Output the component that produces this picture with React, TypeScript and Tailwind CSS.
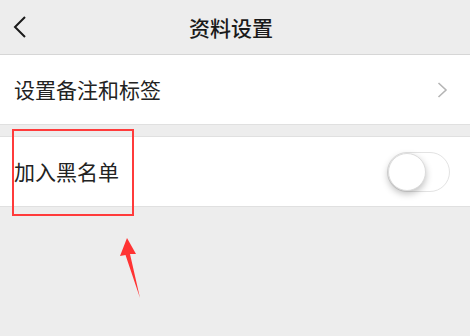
const font = "font-['Noto_Sans_CJK_SC','Noto_Sans',sans-serif]";

function Toggle() {
  return (
    <div className="w-[63px] h-[40px] rounded-full border border-[#e3e3e3] bg-white relative">
      <div className="absolute left-0 top-0 w-[38px] h-[38px] rounded-full bg-white border border-[#dcdcdc] shadow-[0_3px_7px_rgba(0,0,0,0.25)]" />
    </div>
  );
}

export default function App() {
  return (
    <div className={`w-[470px] h-[336px] bg-[#ededed] relative overflow-hidden ${font}`}>
      {/* 상단 바 */}
      <header className="h-[55px] border-b border-[#d6d6d6] flex items-center justify-center pr-[8px] relative">
        <svg
          className="absolute left-[13px] top-[16px]"
          width="15"
          height="22"
          viewBox="0 0 15 22"
          fill="none"
          stroke="#1a1a1a"
          strokeWidth="2"
        >
          <path d="M12 1 L2 11 L12 21" />
        </svg>
        <div className="text-[21px] font-medium text-[#1a1a1a] leading-none">资料设置</div>
      </header>

      {/* 설정 항목 */}
      <div className="h-[70px] bg-white border-b border-[#e0e0e0] flex items-center justify-between pl-[14px] pr-[22px]">
        <div className="text-[21px] text-[#222] leading-none">设置备注和标签</div>
        <svg width="11" height="16" viewBox="0 0 11 16" fill="none" stroke="#b5b5b5" strokeWidth="1.6">
          <path d="M1.5 1 L9 8 L1.5 15" />
        </svg>
      </div>

      <div className="mt-[11px] h-[71px] bg-white border-t border-b border-[#e0e0e0] flex items-center justify-between pl-[14px] pr-[20px]">
        <div className="text-[21px] text-[#222] leading-none">加入黑名单</div>
        <Toggle />
      </div>

      {/* 빨간 강조 박스 */}
      <div className="absolute left-[12px] top-[129px] w-[122px] h-[87px] border-[2.5px] border-[#ff3b3b]" />

      {/* 빨간 화살표 */}
      <svg className="absolute left-[118px] top-[234px]" width="30" height="70" viewBox="0 0 30 70">
        <polygon points="9,4 2,22 7.5,21 22,64 12,20 18,20" fill="#ff3333" />
      </svg>
    </div>
  );
}
